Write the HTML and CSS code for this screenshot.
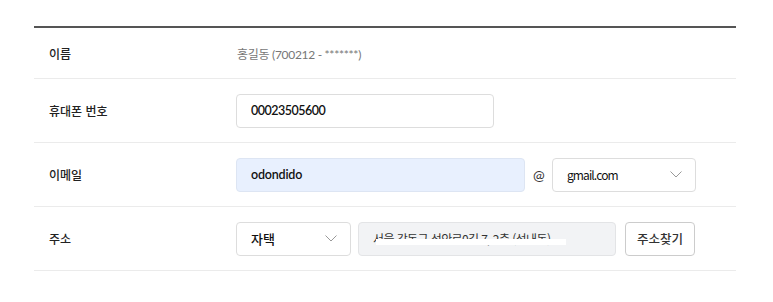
FILE: index.html
```html
<!DOCTYPE html>
<html lang="ko">
<head>
  <meta charset="UTF-8"/>
  <title>회원정보</title>
  <link rel="stylesheet" href="styles.css">
</head>
<body>
  <div class="form">
    <div class="row first">
      <div class="label">이름</div>
      <div class="value name">홍길동 (700212 - *******)</div>
    </div>
    <div class="row">
      <div class="label">휴대폰 번호</div>
      <div class="value">
        <div class="field phone">00023505600</div>
      </div>
    </div>
    <div class="row">
      <div class="label">이메일</div>
      <div class="value">
        <div class="field email">odondido</div>
        <span class="at">@</span>
        <div class="field select domain">
          <span>gmail.com</span>
          <svg class="chev" width="12" height="7" viewBox="0 0 12 7"><path d="M0.5 0.5 L6 6 L11.5 0.5" fill="none" stroke="#999" stroke-width="1"/></svg>
        </div>
      </div>
    </div>
    <div class="row">
      <div class="label">주소</div>
      <div class="value">
        <div class="field select kind">
          <span>자택</span>
          <svg class="chev" width="12" height="7" viewBox="0 0 12 7"><path d="M0.5 0.5 L6 6 L11.5 0.5" fill="none" stroke="#999" stroke-width="1"/></svg>
        </div>
        <div class="field addr">
          <span class="addr-text">서울 강동구 성안로0길 7, 2층 (성내동)<i class="mask"></i></span>
        </div>
        <button class="btn">주소찾기</button>
      </div>
    </div>
  </div>
</body>
</html>
```

FILE: styles.css
```css
body { margin: 0; background: #fff; color: #222; font-family: "Noto Sans CJK KR", sans-serif; }
.form { width: 702px; margin: 26px 0 0 34px; border-top: 2px solid #555; }
.row { display: flex; align-items: center; height: 63px; border-bottom: 1px solid #ebebeb; }
.row.first { height: 50px; }
.label { width: 187px; padding-left: 15px; font-size: 12px; font-weight: 500; color: #222; }
.value { display: flex; align-items: center; font-family: Lato, "Noto Sans CJK KR", sans-serif; font-size: 12.5px; letter-spacing: -0.5px; font-weight: 600; color: #111; }
.value.name { color: #777; font-weight: 400; font-size: 12px; letter-spacing: -0.3px; padding-left: 1px; }
.field { box-sizing: border-box; height: 34px; border: 1px solid #ddd; border-radius: 4px; display: flex; align-items: center; padding: 0 14px; background: #fff; }
.phone { width: 258px; }
.email { width: 289px; background: #e8f0fe; border-color: #dde5f3; letter-spacing: -0.2px; }
.at { width: 27px; text-align: center; font-weight: 400; font-size: 14px; color: #333; }
.select { justify-content: space-between; font-family: "Noto Sans CJK KR", sans-serif; font-weight: 400; }
.domain { width: 144px; font-size: 12px; letter-spacing: -0.9px; }
.select .chev { margin-right: -1px; }
.kind { width: 115px; font-weight: 500; font-size: 13px; letter-spacing: 0; }
.addr { width: 258px; margin-left: 7px; background: #f2f3f5; border-color: #e3e4e6; font-family: "Noto Sans CJK KR", sans-serif; font-weight: 400; font-size: 12px; letter-spacing: -0.6px; color: #333; }
.addr-text { position: relative; }
.mask { position: absolute; left: 3px; right: -16px; top: 9px; height: 6px; background: #fff; }
.btn { box-sizing: border-box; height: 34px; width: 70px; margin-left: 9px; border: 1px solid #ccc; border-radius: 4px; background: #fff; font-family: "Noto Sans CJK KR", sans-serif; font-size: 12.5px; font-weight: 500; color: #333; padding: 0; }
```
